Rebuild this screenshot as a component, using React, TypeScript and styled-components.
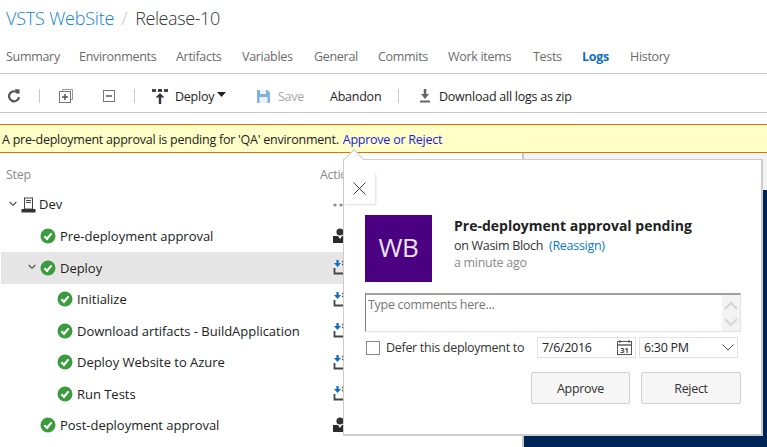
import React from "react";
import styled, { createGlobalStyle } from "styled-components";

const Global = createGlobalStyle`
  html, body { margin: 0; padding: 0; background: #fff; }
  * { box-sizing: border-box; }
`;

const FONT = `"Open Sans", "Noto Sans", sans-serif`;

const Page = styled.div`
  position: relative;
  width: 767px;
  height: 447px;
  overflow: hidden;
  background: #fff;
  font-family: ${FONT};
  color: #222;
  display: flex;
  flex-direction: column;
`;

const TitleBar = styled.div`
  height: 38px;
  padding: 0 0 2px 6px;
  display: flex;
  align-items: center;
  font-size: 18px;
  font-weight: 300;
  letter-spacing: -0.2px;
  color: #333;
`;
const TitleLink = styled.span`color: #0f82d6;`;
const TitleSlash = styled.span`color: #c4c4c4; margin: 0 8px 0 7px;`;
const TitleName = styled.span`letter-spacing: -0.4px;`;

const Tabs = styled.nav`
  height: 36px;
  border-bottom: 1px solid #c8c8c8;
  display: flex;
  align-items: center;
  padding: 2px 0 0 6px;
  font-size: 12.5px;
  letter-spacing: -0.3px;
  color: #6a6a6a;
`;
const Tab = styled.span<{ $w: number; $active?: boolean }>`
  width: ${(p) => p.$w}px;
  flex: none;
  font-weight: ${(p) => (p.$active ? 700 : 400)};
  color: ${(p) => (p.$active ? "#106ebe" : "inherit")};
`;

const Toolbar = styled.div`
  height: 39px;
  padding-top: 6px;
  border-bottom: 1px solid #c8c8c8;
  display: flex;
  align-items: center;
  font-size: 12.5px;
  letter-spacing: -0.24px;
  color: #222;
`;
const ToolSlot = styled.span<{ $left: number; $w: number; $muted?: boolean }>`
  margin-left: ${(p) => p.$left}px;
  width: ${(p) => p.$w}px;
  flex: none;
  display: inline-flex;
  align-items: center;
  white-space: nowrap;
  color: ${(p) => (p.$muted ? "#a6a6a6" : "inherit")};
`;
const Sep = styled.span<{ $left: number }>`
  margin-left: ${(p) => p.$left}px;
  width: 1px;
  height: 14px;
  flex: none;
  background: #c8c8c8;
`;

const Banner = styled.div`
  margin-top: 11px;
  height: 29px;
  background: #ffffc8;
  border-top: 1px solid #e07000;
  border-bottom: 1px solid #e07000;
  padding: 1px 0 0 2px;
  display: flex;
  align-items: center;
  font-size: 12.5px;
  letter-spacing: -0.24px;
  color: #222;
`;
const BannerLink = styled.a`color: #1a1ae0; margin-left: 4px;`;

const Body = styled.div`
  flex: 1;
  min-height: 0;
  display: grid;
  grid-template-columns: 524px 1fr;
`;
const LeftPane = styled.div`
  padding-top: 6px;
  border-right: 2px solid #c8c8c8;
  font-size: 13px;
  letter-spacing: -0.03px;
`;
const RightPane = styled.div`
  display: flex;
  flex-direction: column;
`;
const RightTop = styled.div`height: 37px; background: #f3f3f3;`;
const RightNavy = styled.div`flex: 1; background: #002456;`;

const HeadRow = styled.div`
  height: 30px;
  display: grid;
  grid-template-columns: 314px 1fr;
  align-items: center;
  padding-left: 6px;
  font-size: 12.5px;
  letter-spacing: -0.3px;
  color: #8a8a8a;
`;
const Row = styled.div<{ $indent: number; $selected?: boolean }>`
  height: 31.5px;
  margin-left: 1px;
  display: grid;
  grid-template-columns: ${(p) => 332 - p.$indent}px 1fr;
  align-items: center;
  padding-left: ${(p) => p.$indent}px;
  background: ${(p) => (p.$selected ? "#e6e6e6" : "transparent")};
`;
const RowMain = styled.span`
  display: inline-flex;
  align-items: center;
  white-space: nowrap;
  height: 100%;
`;
const RowLabel = styled.span`margin-left: 4px;`;
const DevLabel = styled.span`margin-left: 3px; padding-bottom: 2px;`;
const Twisty = styled.svg`flex: none; margin-right: 4px; margin-bottom: 2px;`;

const Popup = styled.section`
  position: absolute;
  left: 343px;
  top: 159px;
  width: 420px;
  height: 277px;
  background: #fff;
  border: 2px solid #cdcdcd;
  border-left-width: 1px;
  border-top-width: 1px;
  padding: 55px 21px 0 21px;
  font-size: 12.5px;
  letter-spacing: -0.3px;
`;
const Beak = styled.span`
  position: absolute;
  left: 3px;
  top: -8px;
  width: 14px;
  height: 14px;
  background: #fff;
  border-left: 1px solid #cdcdcd;
  border-top: 1px solid #cdcdcd;
  transform: rotate(45deg);
`;
const CloseButton = styled.span`
  position: absolute;
  left: 0;
  top: 13px;
  width: 31px;
  height: 31px;
  background: #fff;
  box-shadow: 1px 1px 2px rgba(0, 0, 0, 0.14);
  display: flex;
  align-items: center;
  justify-content: center;
`;

const Head = styled.div`
  display: flex;
  height: 67px;
`;
const Avatar = styled.div`
  width: 67px;
  height: 67px;
  flex: none;
  background: #4b0082;
  color: #e8e4f4;
  font-size: 26px;
  letter-spacing: -0.5px;
  display: flex;
  align-items: center;
  justify-content: center;
  padding-bottom: 3px;
`;
const HeadText = styled.div`
  margin-left: 22px;
  display: flex;
  flex-direction: column;
  padding-top: 1px;
`;
const HeadTitle = styled.div`
  height: 20px;
  line-height: 20px;
  font-size: 14px;
  font-weight: 700;
  letter-spacing: 0;
  color: #222;
`;
const HeadLine = styled.div`
  height: 18px;
  line-height: 19px;
  font-size: 12.5px;
  color: #333;
`;
const Reassign = styled.a`color: #0a78d2; margin-left: 6px;`;
const Ago = styled.div`
  height: 18px;
  line-height: 18px;
  font-size: 12.5px;
  color: #8a8a8a;
`;

const Comment = styled.div`
  margin-top: 11px;
  width: 376px;
  height: 39px;
  border-top: 2px solid #a0a0a0;
  border-left: 1px solid #808080;
  border-right: 1px solid #e3e3e3;
  border-bottom: 1px solid #e3e3e3;
  display: flex;
  justify-content: space-between;
`;
const Placeholder = styled.span`
  padding: 1px 0 0 2px;
  line-height: 18px;
  color: #767676;
`;
const ScrollTrack = styled.div`
  width: 18px;
  background: #f3f3f3;
  display: flex;
  flex-direction: column;
  align-items: center;
  justify-content: space-between;
  padding: 6px 0 4px;
`;

const DeferRow = styled.div`
  margin-top: 5px;
  height: 21px;
  display: flex;
  align-items: center;
`;
const Check = styled.span`
  width: 14px;
  height: 14px;
  margin-left: 1px;
  flex: none;
  border: 1px solid #888;
  background: #fff;
`;
const DeferLabel = styled.span`
  margin-left: 6px;
  width: 151px;
  flex: none;
  color: #333;
`;
const Field = styled.div<{ $w: number }>`
  width: ${(p) => p.$w}px;
  height: 21px;
  flex: none;
  margin-right: 3px;
  border: 1px solid #e3e3e3;
  display: flex;
  align-items: center;
  justify-content: space-between;
  padding: 0 3px 0 4px;
  color: #222;
`;
const Actions = styled.div`
  margin-top: 14px;
  width: 376px;
  display: flex;
  justify-content: flex-end;
  gap: 11px;
`;
const Btn = styled.button<{ $w: number }>`
  width: ${(p) => p.$w}px;
  height: 32px;
  padding: 0;
  background: #f6f6f6;
  border: 1px solid #cfcfcf;
  border-radius: 2px;
  font-family: ${FONT};
  font-size: 12.5px;
  letter-spacing: -0.3px;
  color: #333;
`;
const CalText = styled.text`
  font-family: ${FONT};
  font-size: 7.5px;
  font-weight: 700;
  letter-spacing: 0;
  fill: #444;
`;

const Check16 = () => (
  <svg width="16" height="16" viewBox="0 0 16 16" style={{ flex: "none" }}>
    <circle cx="8" cy="8" r="7.5" fill="#3b9c3e" />
    <path d="M4.4 8.2 7 10.8 11.6 5.4" fill="none" stroke="#fff" strokeWidth="2.2" />
  </svg>
);

const Chevron = () => (
  <Twisty width="8" height="6" viewBox="0 0 8 6">
    <path d="M.7 1 4 4.3 7.3 1" fill="none" stroke="#444" strokeWidth="1.1" />
  </Twisty>
);

const ServerIcon = () => (
  <svg width="15" height="16" viewBox="0 0 15 16" style={{ flex: "none" }}>
    <rect x="3.5" y="1" width="8" height="11" fill="#fff" stroke="#444" />
    <path d="M5 3.5h5M5 5.5h5" stroke="#444" />
    <rect x="0.5" y="12" width="14" height="3.5" fill="#333" />
  </svg>
);

const PersonIcon = () => (
  <svg width="14" height="16" viewBox="0 0 14 16">
    <circle cx="7" cy="4" r="3.6" fill="#333" />
    <path d="M0 8h5l2 3 2-3h5v7H0z" fill="#2a2a2a" />
  </svg>
);

const LogIcon = () => (
  <svg width="14" height="15" viewBox="0 0 14 15">
    <path d="M3.4 0v3H1L4.5 7 8 3H5.6V0z" fill="#106ebe" />
    <path d="M9 1.5h5M9 4.5h5" stroke="#444" strokeWidth="1.6" />
    <path d="M1.5 8v5.5H14" fill="none" stroke="#444" strokeWidth="1.8" />
  </svg>
);

const DotsIcon = () => (
  <svg width="14" height="6" viewBox="0 0 14 6">
    <circle cx="2" cy="3" r="1.6" fill="#888" />
    <circle cx="8" cy="3" r="1.6" fill="#888" />
  </svg>
);

const RefreshIcon = () => (
  <svg width="14" height="14" viewBox="0 0 14 14">
    <path d="M11 4.2A5 5 0 1 0 12 8" fill="none" stroke="#555" strokeWidth="2.2" />
    <path d="M7.6 0 12.6 0.4 12.4 5.6z" fill="#555" />
  </svg>
);
const ExpandIcon = () => (
  <svg width="14" height="14" viewBox="0 0 14 14">
    <path d="M3.5 2.5V.5h10v10h-2" fill="none" stroke="#999" />
    <rect x="0.5" y="2.5" width="11" height="11" fill="#fff" stroke="#777" />
    <path d="M6 5v6M3 8h6" stroke="#555" strokeWidth="1.5" />
  </svg>
);
const CollapseIcon = () => (
  <svg width="12" height="12" viewBox="0 0 12 12">
    <rect x="0.5" y="0.5" width="11" height="11" fill="#fff" stroke="#777" />
    <path d="M3 6h6" stroke="#555" strokeWidth="1.5" />
  </svg>
);
const DeployIcon = () => (
  <svg width="16" height="16" viewBox="0 0 16 16">
    <path d="M0 1h4v3H0zM6 1h4v3H6zM12 1h4v3h-4z" fill="#444" />
    <path d="M8 5l4.5 4.5H9.2V16H6.8V9.5H3.5z" fill="#333" />
  </svg>
);
const SaveIcon = () => (
  <svg width="13" height="13" viewBox="0 0 13 13">
    <path d="M0 0h10.5L13 2.5V13H0z" fill="#7fb2dc" />
    <rect x="3" y="0" width="6" height="4" fill="#eaf3fa" />
    <rect x="2.5" y="7" width="8" height="6" fill="#eaf3fa" />
  </svg>
);
const DownloadIcon = () => (
  <svg width="10" height="14" viewBox="0 0 10 14">
    <path d="M3.7 0h2.6v5H9L5 10 1 5h2.7z" fill="#666" />
    <rect x="0" y="11.5" width="10" height="2" fill="#666" />
  </svg>
);
const Caret = () => (
  <svg width="9" height="5" viewBox="0 0 9 5" style={{ marginLeft: 3, marginBottom: 3 }}>
    <path d="M0 0h9L4.5 5z" fill="#222" />
  </svg>
);
const CloseIcon = () => (
  <svg width="13" height="13" viewBox="0 0 13 13">
    <path d="M.5.5l12 12M12.5.5l-12 12" stroke="#444" strokeWidth="1" />
  </svg>
);
const CalendarIcon = () => (
  <svg width="15" height="15" viewBox="0 0 15 15">
    <rect x="0.5" y="1.5" width="14" height="13" fill="#fff" stroke="#555" />
    <path d="M0 5h15" stroke="#555" strokeWidth="1.4" />
    <path d="M3 0v3M12 0v3" stroke="#555" />
    <CalText x="7.5" y="13" textAnchor="middle">31</CalText>
  </svg>
);
const DownChevron = () => (
  <svg width="12" height="7" viewBox="0 0 12 7">
    <path d="M.5.5 6 6 11.5.5" fill="none" stroke="#444" />
  </svg>
);
const ScrollArrow = ({ up }: { up?: boolean }) => (
  <svg width="14" height="9" viewBox="0 0 14 9">
    <path d={up ? "M1 8 7 2l6 6" : "M1 1l6 6 6-6"} fill="none" stroke="#d4d4d4" strokeWidth="2" />
  </svg>
);

const tabs: [string, number, boolean?][] = [
  ["Summary", 73],
  ["Environments", 97],
  ["Artifacts", 66],
  ["Variables", 72],
  ["General", 64],
  ["Commits", 70],
  ["Work items", 85],
  ["Tests", 49],
  ["Logs", 48, true],
  ["History", 60],
];

const steps: { label: string; indent: number; icon: "person" | "log"; twisty?: boolean; selected?: boolean }[] = [
  { label: "Pre-deployment approval", indent: 39, icon: "person" },
  { label: "Deploy", indent: 27, icon: "log", twisty: true, selected: true },
  { label: "Initialize", indent: 56, icon: "log" },
  { label: "Download artifacts - BuildApplication", indent: 56, icon: "log" },
  { label: "Deploy Website to Azure", indent: 56, icon: "log" },
  { label: "Run Tests", indent: 56, icon: "log" },
  { label: "Post-deployment approval", indent: 39, icon: "person" },
];

export default function App() {
  return (
    <Page>
      <Global />
      <TitleBar>
        <TitleLink>VSTS WebSite</TitleLink>
        <TitleSlash>/</TitleSlash>
        <TitleName>Release-10</TitleName>
      </TitleBar>
      <Tabs>
        {tabs.map(([t, w, a]) => (
          <Tab key={t} $w={w} $active={a}>{t}</Tab>
        ))}
      </Tabs>
      <Toolbar>
        <ToolSlot $left={7} $w={14}><RefreshIcon /></ToolSlot>
        <Sep $left={18} />
        <ToolSlot $left={19} $w={14}><ExpandIcon /></ToolSlot>
        <ToolSlot $left={30} $w={12}><CollapseIcon /></ToolSlot>
        <Sep $left={19} />
        <ToolSlot $left={17} $w={23}><DeployIcon /></ToolSlot>
        <ToolSlot $left={0} $w={82}>Deploy<Caret /></ToolSlot>
        <ToolSlot $left={0} $w={21}><SaveIcon /></ToolSlot>
        <ToolSlot $left={0} $w={52} $muted>Save</ToolSlot>
        <ToolSlot $left={0} $w={68}>Abandon</ToolSlot>
        <Sep $left={0} />
        <ToolSlot $left={21} $w={19}><DownloadIcon /></ToolSlot>
        <ToolSlot $left={0} $w={150}>Download all logs as zip</ToolSlot>
      </Toolbar>
      <Banner>
        A pre-deployment approval is pending for 'QA' environment.
        <BannerLink>Approve or Reject</BannerLink>
      </Banner>
      <Body>
        <LeftPane>
          <HeadRow>
            <span>Step</span>
            <span>Actions</span>
          </HeadRow>
          <Row $indent={8}>
            <RowMain>
              <Chevron />
              <ServerIcon />
              <DevLabel>Dev</DevLabel>
            </RowMain>
            <DotsIcon />
          </Row>
          {steps.map((s) => (
            <Row key={s.label} $indent={s.indent} $selected={s.selected}>
              <RowMain>
                {s.twisty && <Chevron />}
                <Check16 />
                <RowLabel>{s.label}</RowLabel>
              </RowMain>
              {s.icon === "person" ? <PersonIcon /> : <LogIcon />}
            </Row>
          ))}
        </LeftPane>
        <RightPane>
          <RightTop />
          <RightNavy />
        </RightPane>
      </Body>
      <Popup>
        <Beak />
        <CloseButton><CloseIcon /></CloseButton>
        <Head>
          <Avatar>WB</Avatar>
          <HeadText>
            <HeadTitle>Pre-deployment approval pending</HeadTitle>
            <HeadLine>on Wasim Bloch<Reassign>(Reassign)</Reassign></HeadLine>
            <Ago>a minute ago</Ago>
          </HeadText>
        </Head>
        <Comment>
          <Placeholder>Type comments here...</Placeholder>
          <ScrollTrack>
            <ScrollArrow up />
            <ScrollArrow />
          </ScrollTrack>
        </Comment>
        <DeferRow>
          <Check />
          <DeferLabel>Defer this deployment to</DeferLabel>
          <Field $w={99}>7/6/2016<CalendarIcon /></Field>
          <Field $w={99}>6:30 PM<DownChevron /></Field>
        </DeferRow>
        <Actions>
          <Btn $w={99}>Approve</Btn>
          <Btn $w={100}>Reject</Btn>
        </Actions>
      </Popup>
    </Page>
  );
}
